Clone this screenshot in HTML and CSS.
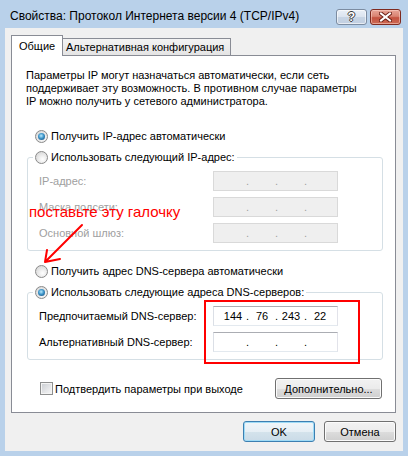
FILE: index.html
```html
<!DOCTYPE html>
<html lang="ru">
<head>
<meta charset="utf-8">
<title>Свойства: Протокол Интернета версии 4 (TCP/IPv4)</title>
<link rel="stylesheet" href="styles.css">
</head>
<body>
<div class="window">
  <div class="titlebar">
    <span class="title">Свойства: Протокол Интернета версии 4 (TCP/IPv4)</span>
    <div class="caption-btns">
      <span class="cbtn help">?</span>
      <span class="cbtn close">
        <svg width="13" height="10" viewBox="0 0 13 10" aria-hidden="true">
          <path d="M2 1.5 L11 8.5 M11 1.5 L2 8.5" stroke="#6b2016" stroke-width="4" stroke-linecap="square" fill="none"/>
          <path d="M2 1.5 L11 8.5 M11 1.5 L2 8.5" stroke="#ffffff" stroke-width="2" stroke-linecap="square" fill="none"/>
        </svg>
      </span>
    </div>
  </div>
  <div class="client">
    <div class="tabs">
      <div class="tab active">Общие</div>
      <div class="tab">Альтернативная конфигурация</div>
    </div>
    <div class="panel">
      <p class="intro">Параметры IP могут назначаться автоматически, если сеть<br>поддерживает эту возможность. В противном случае параметры<br>IP можно получить у сетевого администратора.</p>

      <div class="radio-row first"><span class="radio checked"></span><span>Получить IP-адрес автоматически</span></div>

      <fieldset class="group">
        <legend><span class="legend-inner"><span class="radio"></span><span>Использовать следующий IP-адрес:</span></span></legend>
        <div class="field off"><span>IP-адрес:</span><div class="ip off"><span class="seg"></span><span class="dot">.</span><span class="seg"></span><span class="dot">.</span><span class="seg"></span><span class="dot">.</span><span class="seg"></span></div></div>
        <div class="field off"><span>Маска подсети:</span><div class="ip off"><span class="seg"></span><span class="dot">.</span><span class="seg"></span><span class="dot">.</span><span class="seg"></span><span class="dot">.</span><span class="seg"></span></div></div>
        <div class="field off"><span>Основной шлюз:</span><div class="ip off"><span class="seg"></span><span class="dot">.</span><span class="seg"></span><span class="dot">.</span><span class="seg"></span><span class="dot">.</span><span class="seg"></span></div></div>
      </fieldset>

      <div class="radio-row dns-auto"><span class="radio"></span><span>Получить адрес DNS-сервера автоматически</span></div>

      <fieldset class="group dns">
        <legend><span class="legend-inner"><span class="radio checked"></span><span>Использовать следующие адреса DNS-серверов:</span></span></legend>
        <div class="field"><span>Предпочитаемый DNS-сервер:</span><div class="ip"><span class="seg">144</span><span class="dot">.</span><span class="seg">76</span><span class="dot">.</span><span class="seg">243</span><span class="dot">.</span><span class="seg">22</span></div></div>
        <div class="field"><span>Альтернативный DNS-сервер:</span><div class="ip"><span class="seg"></span><span class="dot">.</span><span class="seg"></span><span class="dot">.</span><span class="seg"></span><span class="dot">.</span><span class="seg"></span></div></div>
      </fieldset>

      <div class="bottom-row">
        <div class="check-row"><span class="checkbox"></span><span>Подтвердить параметры при выходе</span></div>
        <button class="btn advanced" type="button">Дополнительно...</button>
      </div>

      <div class="note">поставьте эту галочку</div>
      <svg class="arrow" width="90" height="215" viewBox="0 0 90 215" aria-hidden="true">
        <path d="M70 169 L33 206 M35 194 L33 206 L48 203" stroke="#ff0000" stroke-width="2" fill="none" stroke-linecap="round" stroke-linejoin="round"/>
      </svg>
      <div class="highlight"></div>
    </div>
    <div class="dialog-buttons">
      <button class="btn default" type="button">OK</button>
      <button class="btn" type="button">Отмена</button>
    </div>
  </div>
</div>
</body>
</html>
```
FILE: styles.css
```css
* { box-sizing: border-box; }
html, body { margin: 0; padding: 0; }
body {
  width: 408px;
  height: 456px;
  overflow: hidden;
  background: #b9d1ea;
  font-family: "Liberation Sans", Arial, sans-serif;
  font-size: 11px;
  color: #000;
}
.window {
  display: flex;
  flex-direction: column;
  height: 456px;
}
.titlebar {
  height: 28px;
  display: flex;
  justify-content: space-between;
  align-items: flex-start;
  padding: 0 7px 0 10px;
}
.title {
  font-size: 12px;
  line-height: 14px;
  padding-top: 9px;
  color: #000;
}
.caption-btns {
  display: flex;
  gap: 3px;
  padding-top: 9px;
}
.cbtn {
  width: 31px;
  height: 16px;
  border-radius: 3px;
  display: flex;
  align-items: center;
  justify-content: center;
}
.help {
  border: 1px solid #7c8ca1;
  background: linear-gradient(#e9eff7 0%, #dbe4ef 50%, #c7d4e4 51%, #c2d0e2 100%);
  box-shadow: inset 0 0 0 1px rgba(255,255,255,0.6);
  color: #fff;
  font-weight: bold;
  font-size: 12px;
  line-height: 14px;
  text-shadow: 1px 0 0 #3a3a3a, -1px 0 0 #3a3a3a, 0 1px 0 #3a3a3a, 0 -1px 0 #3a3a3a;
}
.close {
  border: 1px solid #7f2a1f;
  background: linear-gradient(#e8a597 0%, #d98472 45%, #c4523f 55%, #cc6a55 100%);
  box-shadow: inset 0 0 0 1px rgba(255,220,210,0.5);
}
.client {
  margin: 0 5px;
  height: 423px;
  background: #f0f0f0;
  padding: 7px 7px 0 6px;
  display: flex;
  flex-direction: column;
}
.tabs {
  display: flex;
  align-items: flex-end;
  height: 20px;
  position: relative;
  z-index: 1;
}
.tab {
  height: 17px;
  border: 1px solid #898c95;
  border-bottom: none;
  background: linear-gradient(#f3f3f3, #e4e4e4);
  padding: 1px 0 0 3px;
  line-height: 15px;
  width: 169px;
  margin-left: -1px;
  white-space: nowrap;
}
.tab.active {
  height: 21px;
  margin-bottom: -1px;
  width: 52px;
  margin-left: 0;
  background: #fff;
  padding: 2px 0 0 7px;
  line-height: 16px;
  position: relative;
  z-index: 2;
}
.panel {
  position: relative;
  height: 358px;
  border: 1px solid #898c95;
  background: #fff;
  padding: 13px 12px 0 14px;
  display: flex;
  flex-direction: column;
}
.intro {
  margin: 0;
  line-height: 13px;
}
.radio-row {
  display: flex;
  align-items: center;
  gap: 3px;
  height: 16px;
  margin-left: 9px;
}
.radio-row.first { margin-top: 20px; }
.radio-row.dns-auto { margin-top: 12px; }
.radio {
  width: 13px;
  height: 13px;
  flex: none;
  border-radius: 50%;
  border: 1px solid #8a8a8a;
  background: radial-gradient(circle at 60% 65%, #ffffff 0%, #ececec 40%, #cfcfcf 100%);
  position: relative;
}
.radio.checked::after {
  content: "";
  position: absolute;
  left: 2px;
  top: 2px;
  width: 7px;
  height: 7px;
  border-radius: 50%;
  background: radial-gradient(circle at 45% 40%, #b9ebff 0%, #3e95c9 45%, #0f3f6e 100%);
}
.group {
  margin: 5px 0 0 1px;
  width: 356px;
  min-width: 0;
  border: 1px solid #d5dfe5;
  border-radius: 3px;
  padding: 6px 0 7px 11px;
}
.group.dns { margin-top: 5px; }
.group legend {
  margin-left: -6px;
  padding: 0 2px;
  height: 16px;
}
.legend-inner {
  display: flex;
  align-items: center;
  gap: 3px;
  height: 16px;
}
.field {
  display: grid;
  grid-template-columns: 174px 125px;
  align-items: center;
  height: 20px;
  margin-top: 6px;
}
.field:first-of-type { margin-top: 0; }
.field.off > span { color: #a0a0a0; }
.ip {
  height: 20px;
  border: 1px solid;
  border-color: #abadb3 #e2e3ea #e3e9ef #dbdfe6;
  background: #fff;
  display: flex;
  padding-left: 7px;
  line-height: 18px;
}
.ip.off {
  background: #efefef;
  border-color: #d9d9d9;
  color: #a0a0a0;
}
.seg { width: 24px; text-align: center; }
.dot { width: 5px; text-align: center; }
.bottom-row {
  margin-top: 18px;
  display: flex;
  justify-content: space-between;
  align-items: center;
  height: 21px;
}
.check-row {
  display: flex;
  align-items: center;
  gap: 2px;
  margin-left: 14px;
}
.checkbox {
  width: 13px;
  height: 13px;
  border: 1px solid #8e8f8f;
  background: linear-gradient(135deg, #c9ccd1 0%, #e6e7e9 60%, #f7f7f7 100%);
  box-shadow: inset 0 0 0 1px #f4f4f4;
}
.btn {
  font-family: "Liberation Sans", Arial, sans-serif;
  font-size: 11px;
  color: #000;
  height: 21px;
  border: 1px solid #707070;
  border-radius: 3px;
  background: linear-gradient(#f2f2f2 0%, #ebebeb 50%, #dddddd 51%, #cfcfcf 100%);
  box-shadow: inset 0 0 0 1px #fbfbfb;
  padding: 0;
  line-height: 18px;
}
.btn.advanced {
  width: 107px;
  margin-right: 1px;
}
.dialog-buttons {
  margin-top: 8px;
  display: flex;
  justify-content: flex-end;
  gap: 9px;
}
.dialog-buttons .btn { width: 72px; }
.btn.default {
  border-color: #3c7fb1;
  background: linear-gradient(#f1f6f9 0%, #e6eff5 50%, #d4e3ec 51%, #cadbe7 100%);
  box-shadow: inset 0 0 0 1px #9fdbf6;
}
.note {
  position: absolute;
  left: 17px;
  top: 147px;
  color: #ff0000;
  font-size: 15px;
  line-height: 18px;
  white-space: nowrap;
}
.arrow {
  position: absolute;
  left: 0;
  top: 0;
}
.highlight {
  position: absolute;
  left: 192px;
  top: 244px;
  width: 156px;
  height: 64px;
  border: 2px solid #ff0000;
}
```
